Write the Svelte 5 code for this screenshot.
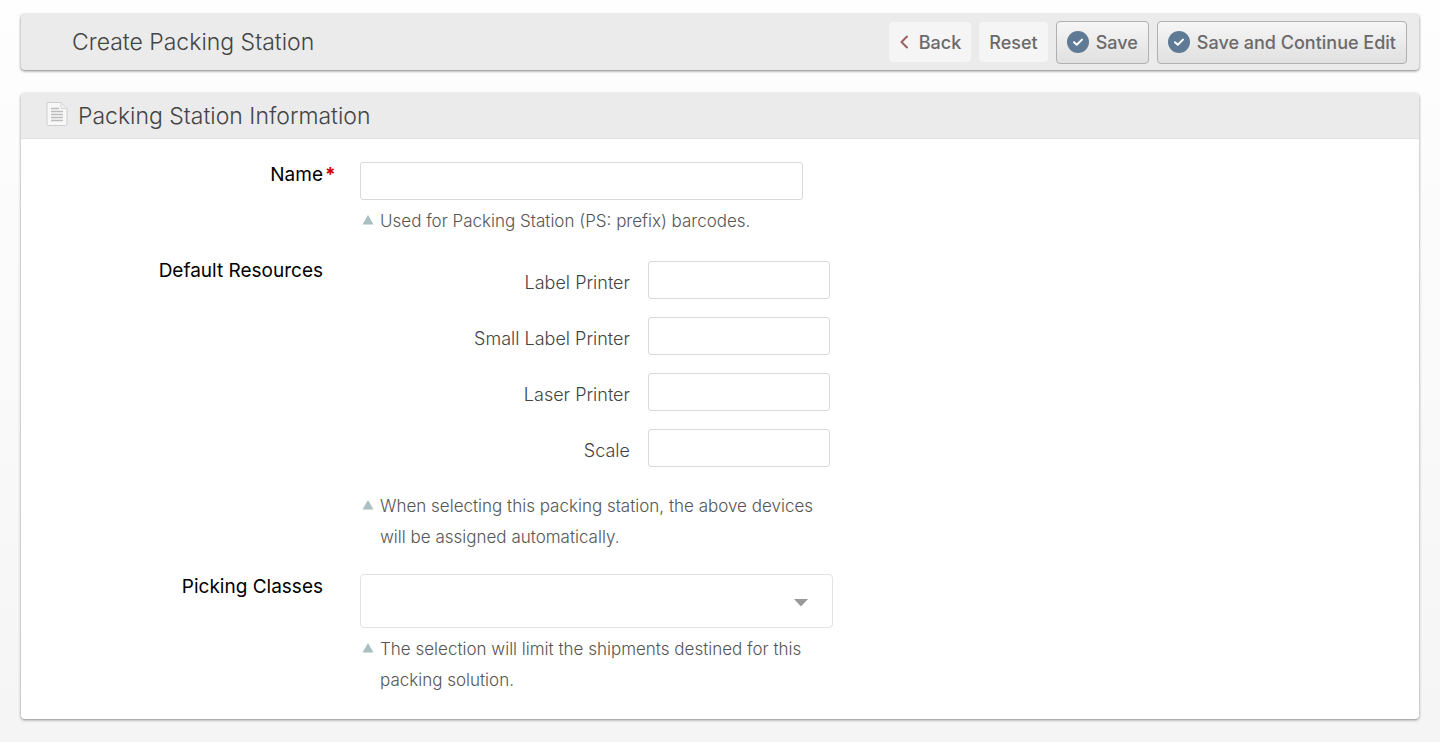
<script lang="ts">
  type Device = { id: string; label: string };

  const devices: Device[] = [
    { id: "label_printer", label: "Label Printer" },
    { id: "small_label_printer", label: "Small Label Printer" },
    { id: "laser_printer", label: "Laser Printer" },
    { id: "scale", label: "Scale" },
  ];

  let name = $state("");
  let pickingClass = $state("");
  let resources: Record<string, string> = $state({
    label_printer: "",
    small_label_printer: "",
    laser_printer: "",
    scale: "",
  });

  function reset() {
    name = "";
    pickingClass = "";
    for (const d of devices) resources[d.id] = "";
  }
</script>

{#snippet check()}
  <svg class="check" viewBox="0 0 22 22" aria-hidden="true">
    <circle cx="11" cy="11" r="11" fill="#5f7a94" />
    <path d="M7 11.2 9.8 13.8 15 8.6" fill="none" stroke="#fff" stroke-width="2" stroke-linecap="round" stroke-linejoin="round" />
  </svg>
{/snippet}

{#snippet note(text: string)}
  <p class="note">
    <svg viewBox="0 0 12 10" aria-hidden="true"><path d="M6 0 11.5 9.5H.5z" fill="#a9bfc1" /></svg>
    <span>{text}</span>
  </p>
{/snippet}

<div class="page">
  <header class="toolbar">
    <h1>Create Packing Station</h1>
    <div class="actions">
      <button type="button" class="plain">
        <svg class="back" viewBox="0 0 10 14" aria-hidden="true">
          <path d="M8 1.5 2.5 7 8 12.5" fill="none" stroke="#9c5f5f" stroke-width="2" stroke-linecap="round" stroke-linejoin="round" />
        </svg>
        Back
      </button>
      <button type="button" class="plain" onclick={reset}>Reset</button>
      <button type="submit" form="station" class="save">{@render check()}Save</button>
      <button type="submit" form="station" class="save">{@render check()}Save and Continue Edit</button>
    </div>
  </header>

  <section class="panel">
    <div class="panel-head">
      <svg class="doc" viewBox="0 0 22 24" aria-hidden="true">
        <path d="M2.5.5H15l6 6V22a1.5 1.5 0 0 1-1.5 1.5h-17A1.5 1.5 0 0 1 1 22V2A1.5 1.5 0 0 1 2.5.5z" fill="#f8f8f8" stroke="#cdcdcd" />
        <path d="M15 1v5.5h5.5" fill="#f0f0f0" stroke="#d6d6d6" />
        <path d="M5 6.5h8M5 9.5h12M5 12.5h12M5 15.5h12M5 18.5h12" stroke="#bcbcbc" stroke-width="1.5" />
      </svg>
      <h2>Packing Station Information</h2>
    </div>

    <form id="station" onsubmit={(e) => e.preventDefault()}>
      <div class="row">
        <label class="row-label" for="name">Name<em>*</em></label>
        <div class="value">
          <input id="name" class="name" type="text" aria-required="true" bind:value={name} />
          {@render note("Used for Packing Station (PS: prefix) barcodes.")}
        </div>
      </div>

      <div class="row">
        <span class="row-label" id="resources-label">Default Resources</span>
        <div class="value" role="group" aria-labelledby="resources-label">
          <div class="devices">
            {#each devices as d (d.id)}
              <label for={d.id}>{d.label}</label>
              <input id={d.id} type="text" bind:value={resources[d.id]} />
            {/each}
          </div>
          {@render note("When selecting this packing station, the above devices will be assigned automatically.")}
        </div>
      </div>

      <div class="row">
        <label class="row-label" for="picking">Picking Classes</label>
        <div class="value">
          <div class="select">
            <select id="picking" bind:value={pickingClass}>
              <option value=""></option>
            </select>
            <svg viewBox="0 0 14 8" aria-hidden="true"><path d="M0 0h14L7 7.5z" fill="#999" /></svg>
          </div>
          {@render note("The selection will limit the shipments destined for this packing solution.")}
        </div>
      </div>
    </form>
  </section>
</div>

<style>
  :global(body) {
    background: linear-gradient(#fefefe, #f5f5f5) no-repeat #f5f5f5;
  }

  .page {
    box-sizing: border-box;
    padding: 14px 21px 23px;
    font-family: Inter, "Liberation Sans", sans-serif;
    font-size: 18px;
    font-weight: 300;
    color: #444;
  }

  h1,
  h2 {
    margin: 0;
    font-size: 23px;
    font-weight: 300;
    line-height: 28px;
  }

  .toolbar {
    display: flex;
    align-items: center;
    justify-content: space-between;
    height: 56px;
    padding: 0 12px 0 51px;
    background: #ebebeb;
    border-radius: 4px;
    box-shadow: 0 1px 3px rgba(0, 0, 0, 0.5);
  }

  .actions {
    display: flex;
    align-items: center;
    gap: 8px;
  }

  button {
    display: flex;
    align-items: center;
    gap: 7px;
    box-sizing: border-box;
    height: 40px;
    padding: 0 10px;
    border: 0;
    border-radius: 4px;
    font: inherit;
    font-weight: 500;
    color: #6a6a6a;
    cursor: pointer;
  }

  .plain {
    background: #f5f5f5;
  }

  .save {
    height: 43px;
    border: 1px solid #b0b0b0;
    background: linear-gradient(#f6f6f6, #e0e0e0);
  }

  .check {
    width: 22px;
    height: 22px;
  }

  .back {
    width: 10px;
    height: 14px;
    margin-right: 3px;
  }

  .panel {
    margin-top: 23px;
    background: #fff;
    border-radius: 4px;
    box-shadow: 0 1px 3px rgba(0, 0, 0, 0.45);
  }

  .panel-head {
    display: flex;
    align-items: center;
    gap: 10px;
    height: 45px;
    padding: 0 25px;
    background: #ebebeb;
    border-bottom: 1px solid #dfdfdf;
    border-radius: 4px 4px 0 0;
  }

  .doc {
    width: 22px;
    height: 24px;
    margin-bottom: 4px;
  }

  form {
    display: flex;
    flex-direction: column;
    gap: 22px;
    padding: 23px 24px 24px;
  }

  .row {
    display: grid;
    grid-template-columns: 278px minmax(0, 473px);
    column-gap: 37px;
  }

  .row-label {
    position: relative;
    justify-self: end;
    align-self: start;
    font-size: 19px;
    font-weight: 400;
    line-height: 26px;
    color: #000;
  }

  .row-label em {
    position: absolute;
    left: 100%;
    padding-left: 2px;
    font-style: normal;
    font-weight: 700;
    color: #c00;
  }

  input,
  select {
    box-sizing: border-box;
    width: 100%;
    height: 38px;
    padding: 0 10px;
    border: 1px solid #d9d9d9;
    border-radius: 3px;
    background: #fff;
    font: inherit;
    color: #333;
  }

  .name {
    display: block;
    max-width: 443px;
  }

  .devices {
    display: grid;
    grid-template-columns: 1fr 182px;
    gap: 18px;
    padding: 3px 3px 18px 0;
  }

  .devices label {
    padding-top: 6px;
    line-height: 32px;
    text-align: right;
  }

  .select {
    display: grid;
    align-items: center;
  }

  .select > * {
    grid-area: 1 / 1;
  }

  .select svg {
    justify-self: end;
    width: 14px;
    height: 8px;
    margin: 4px 25px 0 0;
    pointer-events: none;
  }

  select {
    height: 54px;
    border-color: #e2e2e2;
    border-radius: 4px;
    appearance: none;
  }

  .note {
    display: flex;
    gap: 6px;
    margin: 6px 0 -1px;
    padding-left: 2px;
    font-size: 17px;
    line-height: 31px;
    color: #555;
  }

  .note svg {
    flex: none;
    width: 12px;
    height: 10px;
    margin-top: 9px;
  }
</style>
